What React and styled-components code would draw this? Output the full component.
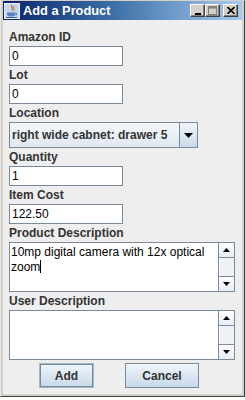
import React from "react";
import styled, { createGlobalStyle } from "styled-components";

const Global = createGlobalStyle`
  html, body { margin: 0; padding: 0; background: #ffffff; }
  body { font-family: "Liberation Sans", Arial, sans-serif; }
`;

const Frame = styled.div`
  width: 245px;
  height: 397px;
  box-sizing: border-box;
  background: #d4d0c8;
  border-top: 1px solid #d4d0c8;
  border-left: 1px solid #e8e6e1;
  border-right: 1px solid #404040;
  border-bottom: 1px solid #404040;
  padding: 0 2px 2px 2px;
  display: flex;
  flex-direction: column;
`;

const TitleBar = styled.div`
  height: 19px;
  flex: none;
  display: flex;
  align-items: center;
  background: linear-gradient(to right, #0a246a 0%, #3a6ea5 45%, #a6caf0 100%);
  padding: 0 4px 0 1px;
`;

const TitleText = styled.span`
  color: #ffffff;
  font-weight: bold;
  font-size: 12.8px;
  margin-left: 3px;
  flex: 1;
  white-space: nowrap;
`;

const TitleButton = styled.div`
  width: 15px;
  height: 13px;
  box-sizing: border-box;
  background: #d4d0c8;
  border-top: 1px solid #ffffff;
  border-left: 1px solid #ffffff;
  border-right: 1px solid #404040;
  border-bottom: 1px solid #404040;
  box-shadow: inset -1px -1px 0 #808080;
  margin-left: ${(p) => p.$gap || 0}px;
  display: flex;
  align-items: center;
  justify-content: center;
`;

const Body = styled.div`
  flex: 1;
  background: #eeeeee;
  padding: 8px 6px 0 6px;
  display: flex;
  flex-direction: column;
`;

const Label = styled.div`
  height: 18px;
  line-height: 18px;
  font-size: 12px;
  font-weight: bold;
  color: #333333;
  white-space: nowrap;
`;

const TextField = styled.div`
  width: 114px;
  height: 20px;
  box-sizing: border-box;
  border: 1px solid #7a8a99;
  background: #ffffff;
  padding-left: 2px;
  font-size: 12px;
  line-height: 18px;
  color: #000000;
`;

const Combo = styled.div`
  width: 189px;
  height: 26px;
  box-sizing: border-box;
  border: 1px solid #7a8a99;
  display: flex;
`;

const ComboValue = styled.div`
  flex: 1;
  background: linear-gradient(to bottom, #f5f8fb, #dfe7f0);
  font-size: 12px;
  font-weight: bold;
  color: #333333;
  line-height: 24px;
  padding-left: 2px;
  white-space: nowrap;
  overflow: hidden;
`;

const ComboArrow = styled.div`
  width: 17px;
  border-left: 1px solid #7a8a99;
  background: linear-gradient(to bottom, #f1f5fa, #c9d9ea);
  display: flex;
  align-items: center;
  justify-content: center;
`;

const AreaBox = styled.div`
  width: 226px;
  height: 50px;
  box-sizing: border-box;
  border: 1px solid #7a8a99;
  background: #ffffff;
  display: flex;
`;

const AreaText = styled.div`
  flex: 1;
  padding: 2px 0 0 1px;
  font-size: 12px;
  line-height: 15px;
  color: #000000;
`;

const Caret = styled.span`
  display: inline-block;
  width: 1px;
  height: 13px;
  background: #000000;
  vertical-align: -2px;
`;

const ScrollBar = styled.div`
  width: 15px;
  border-left: 1px solid #7a8a99;
  display: flex;
  flex-direction: column;
  background: #eeeeee;
`;

const ScrollButton = styled.div`
  height: 15px;
  flex: none;
  box-sizing: border-box;
  background: linear-gradient(to bottom, #ffffff, #e6edf5);
  border-bottom: ${(p) => (p.$up ? "1px solid #7a8a99" : "none")};
  border-top: ${(p) => (p.$up ? "none" : "1px solid #7a8a99")};
  display: flex;
  align-items: center;
  justify-content: center;
`;

const Thumb = styled.div`
  flex: 1;
  box-sizing: border-box;
  border-left: 1px solid #ffffff;
  background: #eef2f7;
`;

const ButtonRow = styled.div`
  display: flex;
  padding-left: 30px;
  margin-top: 3px;
`;

const Button = styled.div`
  width: ${(p) => p.$w}px;
  height: 25px;
  box-sizing: border-box;
  margin-right: ${(p) => p.$mr || 0}px;
  border: 1px solid ${(p) => (p.$focus ? "#a3b8cc" : "#7a8a99")};
  box-shadow: ${(p) => (p.$focus ? "inset 0 0 0 1px #7a8a99" : "none")};
  background: linear-gradient(to bottom, #f0f5fa, #c8d8e9);
  font-size: 12px;
  font-weight: bold;
  color: #333333;
  display: flex;
  align-items: center;
  justify-content: center;
`;

const Down = () => (
  <svg width="9" height="5" viewBox="0 0 9 5">
    <polygon points="0,0 9,0 4.5,5" fill="#000" />
  </svg>
);
const SmallDown = () => (
  <svg width="7" height="4" viewBox="0 0 7 4">
    <polygon points="0,0 7,0 3.5,4" fill="#000" />
  </svg>
);
const SmallUp = () => (
  <svg width="7" height="4" viewBox="0 0 7 4">
    <polygon points="0,4 7,4 3.5,0" fill="#000" />
  </svg>
);

const JavaIcon = () => (
  <svg width="16" height="16" viewBox="0 0 16 16">
    <rect x="0" y="0" width="16" height="16" fill="#c5d7ee" />
    <rect x="0.5" y="0.5" width="15" height="15" fill="none" stroke="#e9f0f9" />
    <path d="M8 2 C6 4 10 5 8 8" stroke="#d2691e" strokeWidth="1.2" fill="none" />
    <path d="M10 3 C9 5 11 6 10 7.5" stroke="#d2691e" strokeWidth="1" fill="none" />
    <path d="M3 9.5 h8 v1.5 c0 2 -2 2.5 -4 2.5 s-4 -0.5 -4 -2.5z" fill="#5a7fbf" />
    <path d="M11 10 h1.5 v2 h-1.5" stroke="#5a7fbf" fill="none" />
    <path d="M2 14.5 h11" stroke="#3a5a9a" strokeWidth="1" />
  </svg>
);

const MinIcon = () => (
  <svg width="8" height="8" viewBox="0 0 8 8">
    <rect x="1" y="6" width="6" height="2" fill="#000" />
  </svg>
);
const MaxIcon = () => (
  <svg width="9" height="9" viewBox="0 0 9 9">
    <rect x="0.5" y="0.5" width="8" height="8" fill="none" stroke="#808080" />
    <rect x="0.5" y="1" width="8" height="1.5" fill="#808080" />
  </svg>
);
const CloseIcon = () => (
  <svg width="8" height="7" viewBox="0 0 8 7">
    <path d="M0.5 0 L7.5 7 M7.5 0 L0.5 7" stroke="#000" strokeWidth="1.6" />
  </svg>
);

const TextArea = ({ children }) => (
  <AreaBox>
    <AreaText>{children}</AreaText>
    <ScrollBar>
      <ScrollButton $up>
        <SmallUp />
      </ScrollButton>
      <Thumb />
      <ScrollButton>
        <SmallDown />
      </ScrollButton>
    </ScrollBar>
  </AreaBox>
);

export default function App() {
  return (
    <>
      <Global />
      <Frame>
        <TitleBar>
          <JavaIcon />
          <TitleText>Add a Product</TitleText>
          <TitleButton>
            <MinIcon />
          </TitleButton>
          <TitleButton>
            <MaxIcon />
          </TitleButton>
          <TitleButton $gap={3}>
            <CloseIcon />
          </TitleButton>
        </TitleBar>
        <Body>
          <Label>Amazon ID</Label>
          <TextField>0</TextField>
          <Label>Lot</Label>
          <TextField>0</TextField>
          <Label>Location</Label>
          <Combo>
            <ComboValue>right wide cabnet: drawer 5</ComboValue>
            <ComboArrow>
              <Down />
            </ComboArrow>
          </Combo>
          <Label>Quantity</Label>
          <TextField>1</TextField>
          <Label>Item Cost</Label>
          <TextField>122.50</TextField>
          <Label>Product Description</Label>
          <TextArea>
            10mp digital camera with 12x optical
            <br />
            zoom
            <Caret />
          </TextArea>
          <Label>User Description</Label>
          <TextArea />
          <ButtonRow>
            <Button $w={55} $mr={31} $focus>
              Add
            </Button>
            <Button $w={74}>Cancel</Button>
          </ButtonRow>
        </Body>
      </Frame>
    </>
  );
}
